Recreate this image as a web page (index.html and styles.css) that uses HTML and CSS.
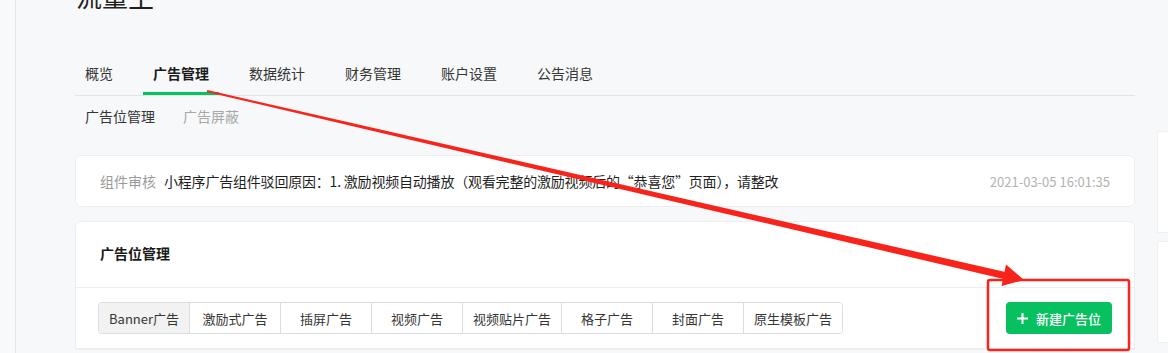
FILE: index.html
```html
<!DOCTYPE html>
<html lang="zh-CN">
<head>
    <meta charset="UTF-8">
    <meta name="viewport" content="width=device-width, initial-scale=1.0">
    <title>流量主</title>
    <link rel="stylesheet" href="styles.css">
</head>
<body>
    <div class="page">
        <div class="rail"></div>

        <div class="main">
            <h1 class="title">流量主</h1>

            <ul class="tabs">
                <li class="tab">概览</li>
                <li class="tab active">广告管理</li>
                <li class="tab">数据统计</li>
                <li class="tab">财务管理</li>
                <li class="tab">账户设置</li>
                <li class="tab">公告消息</li>
            </ul>

            <div class="subnav">
                <span class="sub active">广告位管理</span>
                <span class="sub">广告屏蔽</span>
            </div>

            <div class="card notice">
                <span class="notice-label">组件审核</span>
                <span class="notice-text">小程序广告组件驳回原因：1. 激励视频自动播放（观看完整的激励视频后的“恭喜您”页面），请整改</span>
                <span class="notice-date">2021-03-05 16:01:35</span>
            </div>

            <div class="card slots">
                <div class="slots-head">广告位管理</div>
                <div class="slots-bar">
                    <div class="segments">
                        <button class="seg active">Banner广告</button>
                        <button class="seg">激励式广告</button>
                        <button class="seg">插屏广告</button>
                        <button class="seg">视频广告</button>
                        <button class="seg">视频贴片广告</button>
                        <button class="seg">格子广告</button>
                        <button class="seg">封面广告</button>
                        <button class="seg">原生模板广告</button>
                    </div>
                    <button class="btn-new">
                        <svg width="11" height="11" viewBox="0 0 11 11"><path d="M5.5 0v11M0 5.5h11" stroke="#fff" stroke-width="2"/></svg>
                        新建广告位
                    </button>
                </div>
            </div>
        </div>

        <div class="side">
            <div class="side-panel"></div>
            <div class="side-panel"></div>
        </div>
    </div>

    <!-- annotation drawn over the screenshot -->
    <svg class="annot" width="1168" height="353" viewBox="0 0 1168 353">
        <polygon fill="#f8231a" points="207.2,90 1005.3,272 1003.7,279 206.8,92"/>
        <polygon fill="#f8231a" points="1006,264.5 1024,280 1001.5,286"/>
        <rect x="988" y="280" width="141" height="70" rx="2" fill="none" stroke="#f8231a" stroke-width="2.5"/>
    </svg>
</body>
</html>
```

FILE: styles.css
```css
body {
    margin: 0;
    font-family: 'Noto Sans CJK SC', 'Noto Sans', sans-serif;
    background-color: #f7f8fa;
    color: #353535;
    overflow: hidden;
}

.page {
    display: flex;
    height: 353px;
}

.rail {
    width: 15px;
    flex-shrink: 0;
    border-right: 1px solid #e3e5e9;
    background-color: #f8f9fb;
}

.main {
    width: 1060px;
    flex-shrink: 0;
    margin-left: 59px;
}

.title {
    margin: -17px 0 0 1px;
    font-size: 26px;
    line-height: 26px;
    font-weight: 400;
    color: #1f1f1f;
}

.tabs {
    display: flex;
    gap: 20px;
    list-style: none;
    margin: 54px 0 0;
    padding: 0;
    border-bottom: 1px solid #e2e3e6;
}

.tab {
    padding: 0 10px 9px;
    font-size: 14px;
    line-height: 20px;
    color: #353535;
    border-bottom: 3px solid transparent;
}

.tab.active {
    font-weight: 700;
    color: #1a1a1a;
    border-bottom-color: #07c160;
}

.subnav {
    display: flex;
    gap: 28px;
    margin: 10px 0 0 10px;
    font-size: 14px;
    line-height: 20px;
}

.sub {
    color: #a8a8a8;
}

.sub.active {
    color: #353535;
}

.card {
    background-color: #fff;
    border: 1px solid #eceef1;
    border-radius: 6px;
}

.notice {
    display: flex;
    align-items: center;
    height: 50px;
    margin-top: 29px;
    padding: 0 24px;
    font-size: 14px;
}

.notice-label {
    color: #9a9a9a;
    margin-right: 8px;
}

.notice-text {
    color: #1f1f1f;
    letter-spacing: -0.2px;
}

.notice-date {
    margin-left: auto;
    font-size: 13px;
    color: #b2b2b2;
}

.slots {
    margin-top: 14px;
    border-bottom-left-radius: 0;
    border-bottom-right-radius: 0;
}

.slots-head {
    height: 66px;
    display: flex;
    align-items: center;
    padding: 0 24px 4px;
    box-sizing: border-box;
    font-size: 14px;
    font-weight: 700;
    color: #1a1a1a;
    border-bottom: 1px solid #eceef1;
}

.slots-bar {
    display: flex;
    justify-content: space-between;
    align-items: center;
    padding: 14px 22px;
    border-bottom: 1px solid #eceef1;
}

.segments {
    display: flex;
    border: 1px solid #dcdde0;
    border-radius: 4px;
    overflow: hidden;
}

.seg {
    min-width: 91px;
    height: 30px;
    padding: 0 10px;
    border: none;
    border-left: 1px solid #dcdde0;
    background-color: #fff;
    font-family: inherit;
    font-size: 13px;
    color: #353535;
}

.seg:first-child {
    min-width: 90px;
    border-left: none;
}

.seg.active {
    background-color: #f2f2f2;
}

.btn-new {
    display: flex;
    align-items: center;
    gap: 8px;
    height: 32px;
    padding: 0 11px 0 11px;
    border: none;
    border-radius: 4px;
    background-color: #07c160;
    color: #fff;
    font-family: inherit;
    font-size: 13px;
    font-weight: 500;
}

.side {
    margin-left: 22px;
    padding-top: 131px;
}

.side-panel {
    width: 40px;
    height: 100px;
    margin-bottom: 8px;
    background-color: #fff;
    border: 1px solid #eff0f2;
}

.annot {
    position: absolute;
    left: 0;
    top: 0;
    pointer-events: none;
}
```
